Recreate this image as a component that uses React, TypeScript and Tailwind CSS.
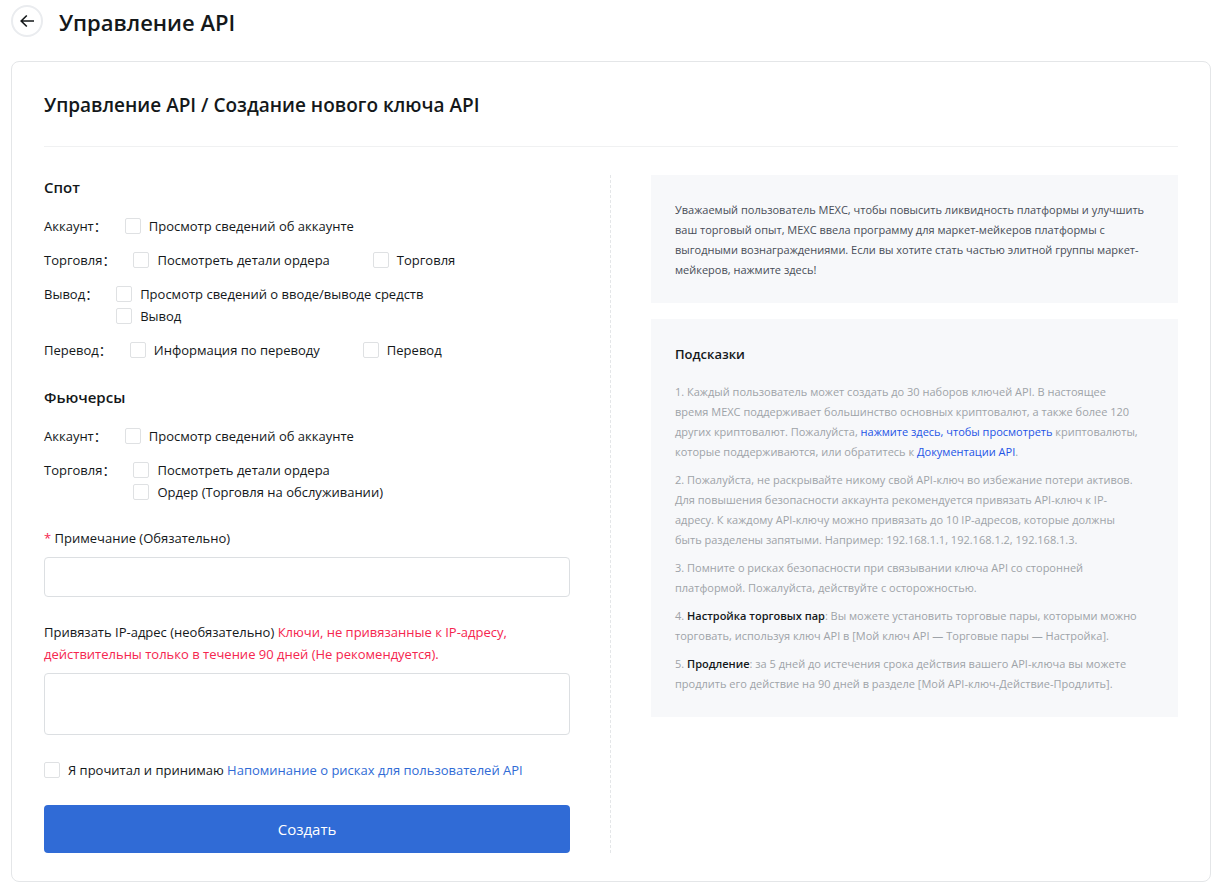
import { useId, type ReactNode } from "react";

function Check({ children }: { children: ReactNode }) {
  const id = useId();
  return (
    <div className="flex items-center gap-2">
      <input
        id={id}
        type="checkbox"
        className="size-4 shrink-0 appearance-none rounded-xs border border-[#dfe1e3] bg-white checked:border-[#306bd6] checked:bg-[#306bd6]"
      />
      <label htmlFor={id}>{children}</label>
    </div>
  );
}

function PermissionRow({ label, options, stacked = false }: { label: string; options: string[]; stacked?: boolean }) {
  return (
    <div role="group" aria-label={label} className="flex gap-[18px]">
      <span>{label}：</span>
      <div className={stacked ? "flex flex-col" : "flex flex-wrap gap-x-[43px]"}>
        {options.map((option) => (
          <Check key={option}>{option}</Check>
        ))}
      </div>
    </div>
  );
}

function PermissionSection({ title, children }: { title: string; children: ReactNode }) {
  return (
    <section className="mb-6">
      <h3 className="mb-4 text-[15px] leading-6 font-semibold">{title}</h3>
      <div className="flex flex-col gap-3">{children}</div>
    </section>
  );
}

const link = "text-[#2354e6]";

export default function App() {
  return (
    <div className="min-h-screen bg-white pt-[5px] pr-3 pb-3 pl-[11px] font-['Open_Sans','Noto_Sans_CJK_SC',sans-serif] text-[13px] leading-[22px] text-[#14181a]">
      <header className="flex h-8 items-center gap-4">
        <button
          type="button"
          aria-label="Назад"
          className="flex size-8 items-center justify-center rounded-full border-2 border-[#eaecef]"
        >
          <svg viewBox="0 0 16 16" className="size-4" fill="none" stroke="currentColor" strokeWidth="1.6">
            <path d="M15 8H2.2M7.8 2.5L2.2 8l5.6 5.5" />
          </svg>
        </button>
        <h1 className="pt-0.5 text-[22px] leading-8 font-semibold">Управление API</h1>
      </header>

      <main className="mt-6 rounded-lg border border-[#e4e6e8] px-8 pt-7 pb-7">
        <h2 className="border-b border-[#f0f1f2] pb-[27px] pt-px text-[19px] leading-7 font-semibold">
          Управление API / Создание нового ключа API
        </h2>

        <div className="mt-7 grid grid-cols-2">
          <form className="border-r border-dashed border-[#e4e6e8] pr-10" onSubmit={(e) => e.preventDefault()}>
            <PermissionSection title="Спот">
              <PermissionRow label="Аккаунт" options={["Просмотр сведений об аккаунте"]} />
              <PermissionRow label="Торговля" options={["Посмотреть детали ордера", "Торговля"]} />
              <PermissionRow label="Вывод" options={["Просмотр сведений о вводе/выводе средств", "Вывод"]} stacked />
              <PermissionRow label="Перевод" options={["Информация по переводу", "Перевод"]} />
            </PermissionSection>
            <PermissionSection title="Фьючерсы">
              <PermissionRow label="Аккаунт" options={["Просмотр сведений об аккаунте"]} />
              <PermissionRow
                label="Торговля"
                options={["Посмотреть детали ордера", "Ордер (Торговля на обслуживании)"]}
                stacked
              />
            </PermissionSection>

            <label htmlFor="note" className="block">
              <span className="text-[#f5264f]">*</span> Примечание (Обязательно)
            </label>
            <input id="note" type="text" className="mt-2 block h-10 w-full rounded-sm border border-[#dcdfe2] px-3" />

            <label htmlFor="ips" className="mt-6 block">
              Привязать IP-адрес (необязательно){" "}
              <span className="text-[#f5264f]">
                Ключи, не привязанные к IP-адресу,
                <br />
                действительны только в течение 90 дней (Не рекомендуется).
              </span>
            </label>
            <textarea
              id="ips"
              className="mt-2 block h-[62px] w-full resize-none rounded-sm border border-[#dcdfe2] px-3 py-2"
            />

            <div className="mt-6">
              <Check>
                Я прочитал и принимаю{" "}
                <a href="#risk" className="text-[#306bd6]">
                  Напоминание о рисках для пользователей API
                </a>
              </Check>
            </div>

            <button type="submit" className="mt-6 block h-12 w-full rounded-sm bg-[#306bd6] text-[15px] text-white">
              Создать
            </button>
          </form>

          <aside className="flex flex-col gap-4 pl-10 text-[11px] leading-5">
            <p className="bg-[#f7f8fa] px-6 pt-[25px] pb-[23px] text-[#474d57]">
              Уважаемый пользователь MEXC, чтобы повысить ликвидность платформы и улучшить ваш торговый опыт, MEXC ввела
              программу для маркет-мейкеров платформы с выгодными вознаграждениями. Если вы хотите стать частью элитной
              группы маркет-мейкеров, нажмите здесь!
            </p>
            <section className="bg-[#f7f8fa] px-6 pt-6 pb-[23px] text-[#9ea3a8]">
              <h3 className="mb-[17px] text-[13px] leading-[22px] font-semibold text-[#14181a]">Подсказки</h3>
              <div className="flex flex-col gap-2">
                <p>
                  1. Каждый пользователь может создать до 30 наборов ключей API. В настоящее
                  <br />
                  время MEXC поддерживает большинство основных криптовалют, а также более 120
                  <br />
                  других криптовалют. Пожалуйста,{" "}
                  <a href="#coins" className={link}>
                    нажмите здесь, чтобы просмотреть
                  </a>{" "}
                  криптовалюты, которые поддерживаются, или обратитесь к{" "}
                  <a href="#docs" className={link}>
                    Документации API
                  </a>
                  .
                </p>
                <p>
                  2. Пожалуйста, не раскрывайте никому свой API-ключ во избежание потери активов.
                  <br />
                  Для повышения безопасности аккаунта рекомендуется привязать API-ключ к IP-
                  <br />
                  адресу. К каждому API-ключу можно привязать до 10 IP-адресов, которые должны
                  <br />
                  быть разделены запятыми. Например: 192.168.1.1, 192.168.1.2, 192.168.1.3.
                </p>
                <p>
                  3. Помните о рисках безопасности при связывании ключа API со сторонней платформой. Пожалуйста,
                  действуйте с осторожностью.
                </p>
                <p>
                  4. <strong className="font-semibold text-[#14181a]">Настройка торговых пар</strong>: Вы можете
                  установить торговые пары, которыми можно торговать, используя ключ API в [Мой ключ API — Торговые пары
                  — Настройка].
                </p>
                <p>
                  5. <strong className="font-semibold text-[#14181a]">Продление</strong>: за 5 дней до истечения срока
                  действия вашего API-ключа вы можете продлить его действие на 90 дней в разделе [Мой
                  API-ключ-Действие-Продлить].
                </p>
              </div>
            </section>
          </aside>
        </div>
      </main>
    </div>
  );
}
